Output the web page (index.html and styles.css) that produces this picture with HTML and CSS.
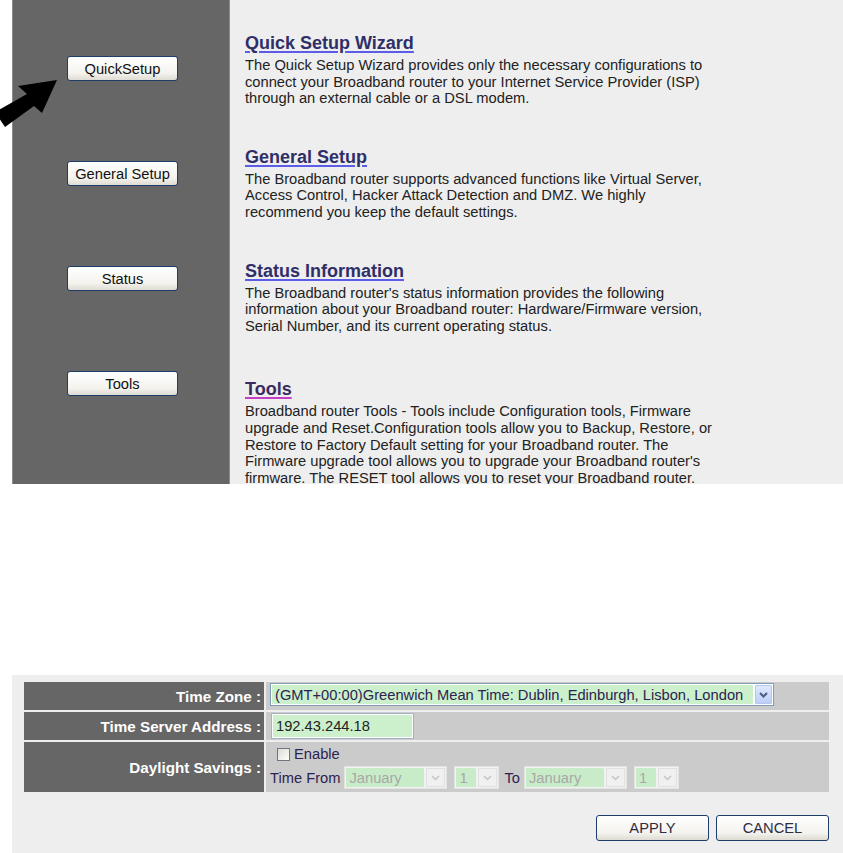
FILE: index.html
```html
<!DOCTYPE html>
<html lang="en">
<head>
    <meta charset="UTF-8">
    <title>Broadband Router Setup</title>
    <link rel="stylesheet" href="styles.css">
</head>
<body>
    <!-- Main menu -->
    <div class="setup">
        <svg class="pointer" width="60" height="60" viewBox="0 0 60 60">
            <polygon points="57,8 18,14 27,22 -5,40 5,55 34,34 42,41" fill="#000"/>
        </svg>

        <div class="side">
            <button class="btn side-btn">QuickSetup</button>
            <button class="btn side-btn">General Setup</button>
            <button class="btn side-btn">Status</button>
            <button class="btn side-btn">Tools</button>
        </div>

        <div class="main">
            <div class="item">
                <h3><a href="#">Quick Setup Wizard</a></h3>
                <p>The Quick Setup Wizard provides only the necessary configurations to<br>
                connect your Broadband router to your Internet Service Provider (ISP)<br>
                through an external cable or a DSL modem.</p>
            </div>
            <div class="item">
                <h3><a href="#">General Setup</a></h3>
                <p>The Broadband router supports advanced functions like Virtual Server,<br>
                Access Control, Hacker Attack Detection and DMZ. We highly<br>
                recommend you keep the default settings.</p>
            </div>
            <div class="item">
                <h3><a href="#">Status Information</a></h3>
                <p>The Broadband router's status information provides the following<br>
                information about your Broadband router: Hardware/Firmware version,<br>
                Serial Number, and its current operating status.</p>
            </div>
            <div class="item item-tools">
                <h3><a href="#" class="visited">Tools</a></h3>
                <p>Broadband router Tools - Tools include Configuration tools, Firmware<br>
                upgrade and Reset.Configuration tools allow you to Backup, Restore, or<br>
                Restore to Factory Default setting for your Broadband router. The<br>
                Firmware upgrade tool allows you to upgrade your Broadband router's<br>
                firmware. The RESET tool allows you to reset your Broadband router.</p>
            </div>
        </div>
    </div>

    <!-- Time zone settings -->
    <div class="settings">
        <table class="form">
            <tr>
                <th>Time Zone :</th>
                <td>
                    <span class="select select-zone">
                        <select>
                            <option>(GMT+00:00)Greenwich Mean Time: Dublin, Edinburgh, Lisbon, London</option>
                        </select>
                        <span class="caret"><svg width="9" height="6" viewBox="0 0 9 6"><path d="M1 1l3.5 3.5L8 1" fill="none" stroke="#4a5c80" stroke-width="2"/></svg></span>
                    </span>
                </td>
            </tr>
            <tr>
                <th>Time Server Address :</th>
                <td><input type="text" class="text-input" value="192.43.244.18"></td>
            </tr>
            <tr class="row-tall">
                <th>Daylight Savings :</th>
                <td>
                    <div class="check-line">
                        <input type="checkbox" class="check" id="dst">
                        <label for="dst">Enable</label>
                    </div>
                    <div class="time-line">
                        <span>Time From</span>
                        <span class="select select-off sel-month">
                            <select disabled><option>January</option></select>
                            <span class="caret"><svg width="9" height="6" viewBox="0 0 9 6"><path d="M1 1l3.5 3.5L8 1" fill="none" stroke="#c4c4c4" stroke-width="1.5"/></svg></span>
                        </span>
                        <span class="select select-off sel-day">
                            <select disabled><option>1</option></select>
                            <span class="caret"><svg width="9" height="6" viewBox="0 0 9 6"><path d="M1 1l3.5 3.5L8 1" fill="none" stroke="#c4c4c4" stroke-width="1.5"/></svg></span>
                        </span>
                        <span class="to">To</span>
                        <span class="select select-off sel-month">
                            <select disabled><option>January</option></select>
                            <span class="caret"><svg width="9" height="6" viewBox="0 0 9 6"><path d="M1 1l3.5 3.5L8 1" fill="none" stroke="#c4c4c4" stroke-width="1.5"/></svg></span>
                        </span>
                        <span class="select select-off sel-day">
                            <select disabled><option>1</option></select>
                            <span class="caret"><svg width="9" height="6" viewBox="0 0 9 6"><path d="M1 1l3.5 3.5L8 1" fill="none" stroke="#c4c4c4" stroke-width="1.5"/></svg></span>
                        </span>
                    </div>
                </td>
            </tr>
        </table>

        <div class="actions">
            <button class="btn action-btn">APPLY</button>
            <button class="btn action-btn">CANCEL</button>
        </div>
    </div>
</body>
</html>
```

FILE: styles.css
```css
body {
    margin: 0;
    background-color: #fff;
    font-family: 'Liberation Sans', Arial, sans-serif;
    font-size: 14.7px;
    color: #222;
}

/* shared XP style button */
.btn {
    box-sizing: border-box;
    height: 25px;
    padding: 0;
    border: 1px solid #1d3e6b;
    border-radius: 3px;
    background: linear-gradient(#ffffff, #f4f3ee 70%, #dedbd2);
    font-family: 'Liberation Sans', Arial, sans-serif;
    font-size: 14.7px;
    color: #111;
    cursor: pointer;
}

/* top part */
.setup {
    position: relative;
    display: flex;
    height: 484px;
    margin-left: 12px;
    background-color: #eeeeee;
}

.pointer {
    position: absolute;
    left: -12px;
    top: 72px;
    overflow: visible;
}

.side {
    display: flex;
    flex-direction: column;
    align-items: flex-start;
    gap: 80px;
    width: 216px;
    padding-top: 56px;
    border-left: 1px solid #8c8c8c;
    border-right: 1px solid #8c8c8c;
    background-color: #666666;
}

.side-btn {
    width: 111px;
    margin-left: 54px;
}

.main {
    flex: 1;
    padding: 33px 0 0 15px;
    overflow: hidden;
}

.item {
    margin-bottom: 40px;
}

.item-tools {
    margin-top: 45px;
}

.item h3 {
    margin: 0 0 4px;
    font-size: 18px;
    line-height: 20px;
}

.item h3 a {
    color: #2f2f68;
    text-decoration: underline;
    text-decoration-color: #5c5ce8;
    text-decoration-thickness: 2px;
    text-underline-offset: 2px;
}

.item h3 a.visited {
    color: #3a2c5e;
    text-decoration-color: #c43fc4;
}

.item p {
    margin: 0;
    line-height: 16.6px;
    white-space: nowrap;
}

/* bottom part */
.settings {
    box-sizing: border-box;
    height: 178px;
    margin: 191px 0 0 12px;
    padding: 5px 0 0 10px;
    background-color: #eeeeee;
}

.form {
    width: 809px;
    border-spacing: 2px;
}

.form th {
    width: 237px;
    height: 28px;
    padding: 0 3px 0 0;
    background-color: #666666;
    color: #fff;
    font-size: 15.2px;
    font-weight: bold;
    text-align: right;
}

.form td {
    height: 28px;
    padding: 0 4px;
    background-color: #cbcbcb;
}

.form .row-tall th,
.form .row-tall td {
    height: 48px;
}

.form .row-tall td {
    vertical-align: top;
    padding-top: 2px;
}

.select {
    display: inline-flex;
    box-sizing: border-box;
    height: 23px;
    vertical-align: middle;
}

.select select {
    appearance: none;
    -webkit-appearance: none;
    flex: 1;
    min-width: 0;
    height: 100%;
    margin: 0;
    padding: 0 3px;
    border: none;
    border-radius: 0;
    font-family: 'Liberation Sans', Arial, sans-serif;
    font-size: 14.7px;
}

.caret {
    display: flex;
    align-items: center;
    justify-content: center;
    box-sizing: border-box;
    width: 17px;
    height: 100%;
}

.select-zone {
    width: 504px;
    margin-top: -3px;
    padding: 1px;
    border: 1px solid #7f9db9;
    background-color: #fff;
}

.select-zone select {
    background-color: #ccefcc;
    color: #2b2450;
}

.select-zone .caret {
    margin-left: 2px;
    border: 1px solid #b4c6ee;
    border-radius: 1px;
    background: linear-gradient(#dfe8fd, #bccff6);
}

.select-off {
    padding: 1px;
    border: 1px solid #e2e2e2;
    background-color: #f2f2f2;
}

.select-off select {
    background-color: #c8ecc8;
    color: #a8a8a8;
    opacity: 1;
}

.select-off .caret {
    width: 19px;
    margin-left: 2px;
    border: 1px solid #e0e0e0;
    background-color: #f0f0f0;
}

.sel-month {
    width: 103px;
}

.sel-day {
    width: 45px;
}

.text-input {
    box-sizing: border-box;
    width: 143px;
    height: 26px;
    margin: 0 0 0 1px;
    padding: 0 4px;
    border: 1px solid #a5b3c6;
    outline: 1px solid #fff;
    outline-offset: -2px;
    background-color: #ccefcc;
    font-family: 'Liberation Sans', Arial, sans-serif;
    font-size: 14.7px;
    color: #222;
    vertical-align: middle;
}

.check-line {
    display: flex;
    align-items: center;
    height: 20px;
    color: #2b2450;
}

.check {
    appearance: none;
    -webkit-appearance: none;
    box-sizing: border-box;
    width: 13px;
    height: 13px;
    margin: 0 4px 0 7px;
    border: 1px solid #6f7680;
    background: linear-gradient(135deg, #dcdcd6, #fdfdfb);
}

.time-line {
    display: flex;
    align-items: center;
    gap: 4px;
    margin-top: 2px;
    color: #2b2450;
}

.time-line .sel-day {
    margin-left: 3px;
}

.time-line .to {
    margin-left: 1px;
}

.actions {
    display: flex;
    justify-content: flex-end;
    gap: 7px;
    width: 807px;
    margin-top: 21px;
}

.action-btn {
    width: 113px;
    height: 26px;
    color: #2d2d44;
}
```
